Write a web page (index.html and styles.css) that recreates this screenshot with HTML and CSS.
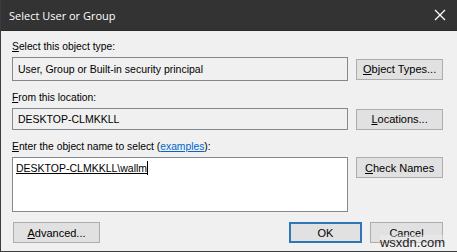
FILE: index.html
```html
<!DOCTYPE html>
<html lang="en">
<head>
    <meta charset="UTF-8">
    <title>Select User or Group</title>
    <link rel="stylesheet" href="styles.css">
</head>
<body>
    <div class="window">
        <div class="titlebar">
            <span class="title">Select User or Group</span>
            <svg class="close" width="12" height="12" viewBox="0 0 12 12">
                <path d="M1 1 L11 11 M11 1 L1 11" stroke="#fff" stroke-width="1.3"/>
            </svg>
        </div>
        <div class="content">
            <!-- object type -->
            <div class="label"><u>S</u>elect this object type:</div>
            <div class="row center">
                <div class="field readonly tall">User, Group or Built-in security principal</div>
                <div class="button"><u>O</u>bject Types...</div>
            </div>

            <!-- location -->
            <div class="label"><u>F</u>rom this location:</div>
            <div class="row center">
                <div class="field readonly">DESKTOP-CLMKKLL</div>
                <div class="button"><u>L</u>ocations...</div>
            </div>

            <!-- names -->
            <div class="label"><u>E</u>nter the object name to select (<span class="link">examples</span>):</div>
            <div class="row top">
                <div class="field names"><span class="entered">DESKTOP-CLMKKLL\wallm</span><span class="caret"></span></div>
                <div class="button"><u>C</u>heck Names</div>
            </div>

            <div class="footer">
                <div class="button advanced"><u>A</u>dvanced...</div>
                <div class="actions">
                    <div class="button small default">OK</div>
                    <div class="button small">Cancel</div>
                </div>
            </div>
            <div class="watermark">wsxdn.com</div>
        </div>
    </div>
</body>
</html>
```

FILE: styles.css
```css
/* Classic Windows "Select User or Group" dialog */
body {
    margin: 0;
    background: #f0f0f0;
    font-family: "Liberation Sans", Arial, sans-serif;
    font-size: 10.3px;
    color: #000;
}

.window {
    width: 457px;
    height: 252px;
    box-sizing: border-box;
    border-left: 1px solid #3c3c3c;
    border-bottom: 1px solid #3c3c3c;
    display: flex;
    flex-direction: column;
}

.titlebar {
    height: 31px;
    background: #333;
    border-bottom: 1px solid #2a2a2a;
    box-sizing: border-box;
    display: flex;
    align-items: center;
    justify-content: space-between;
    padding: 0 11px 0 8px;
}

.title {
    color: #fff;
    font-family: "Open Sans", "Noto Sans", sans-serif;
    font-size: 11px;
}

.content {
    position: relative;
    flex: 1;
    background: #f0f0f0;
    padding: 9px 14px 0 11px;
}

.label {
    height: 14px;
    line-height: 14px;
    margin-bottom: 3px;
}

.link {
    color: #0066cc;
    text-decoration: underline;
}

.row {
    display: flex;
    gap: 8px;
    margin-bottom: 10px;
}

.row.center {
    align-items: center;
}

.row.top {
    align-items: flex-start;
}

.field {
    width: 337px;
    height: 22px;
    box-sizing: border-box;
    border: 1px solid #828790;
    padding: 0 5px;
    display: flex;
    align-items: center;
    font-size: 10.5px;
}

.field.tall {
    height: 24px;
}

.readonly {
    background: #f0f0f0;
}

.field.names {
    height: 55px;
    background: #fff;
    align-items: flex-start;
    padding: 3px 3px;
}

.entered {
    text-decoration: underline;
    line-height: 14px;
}

.caret {
    display: inline-block;
    width: 1px;
    height: 14px;
    background: #000;
}

.button {
    width: 87px;
    height: 21px;
    box-sizing: border-box;
    background: #e1e1e1;
    border: 1px solid #adadad;
    display: flex;
    align-items: center;
    justify-content: center;
    font-size: 11px;
}

.footer {
    display: flex;
    justify-content: space-between;
    padding-left: 1px;
}

.actions {
    display: flex;
    gap: 8px;
}

.button.small {
    width: 73px;
}

.button.default {
    border: 2px solid #2f76b8;
}

.watermark {
    position: absolute;
    right: 12px;
    bottom: 1px;
    font-size: 13px;
    color: #222;
    background: rgba(240, 240, 240, 0.4);
}
```
